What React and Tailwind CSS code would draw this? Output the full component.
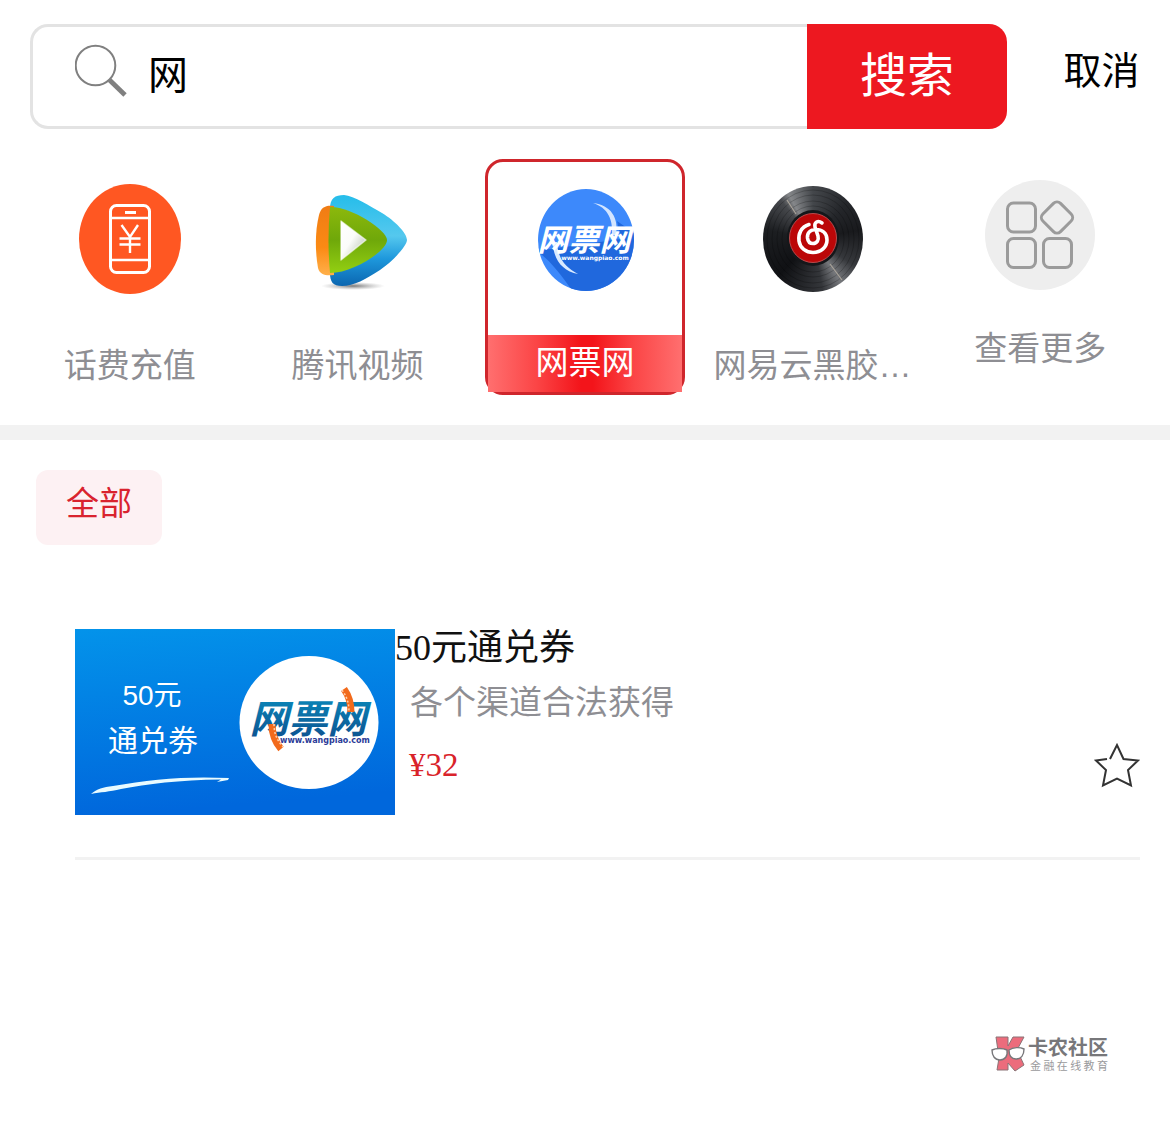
import React from "react";

const SANS = "font-['Liberation_Sans','Noto_Sans_CJK_SC',sans-serif]";
const SERIF = "font-['Liberation_Serif','Noto_Sans_CJK_SC',serif]";
const WIDE = "font-['DejaVu_Sans',sans-serif]";

function SearchIcon() {
  return (
    <svg width="52" height="54" viewBox="0 0 52 54" fill="none" stroke="#808080" aria-hidden="true">
      <circle cx="20.500" cy="21.500" r="19.800" strokeWidth="2" />
      <path d="M34.500 36 L50 51" strokeWidth="4.800" />
    </svg>
  );
}

function PhoneIcon() {
  return (
    <svg width="104" height="110" viewBox="0 0 104 110" fill="none" stroke="#fff" aria-hidden="true">
      <ellipse cx="52" cy="55" rx="51" ry="55" fill="#ff5722" stroke="none" />
      <rect x="32.500" y="21.500" width="39" height="67" rx="6" strokeWidth="3" />
      <path d="M32 34h39M32 76h39" strokeWidth="2.600" />
      <path d="M47 28.500h11" strokeWidth="3" />
      <path d="M43.500 41 L52 53 L60 41M52 53v16M41.500 54.500h21M41.500 60.500h21" strokeWidth="2.400" />
    </svg>
  );
}

function VideoIcon() {
  return (
    <svg width="104" height="110" viewBox="-3 -1 104 110" aria-hidden="true">
      <defs>
        <linearGradient id="vBlue" x1="0" y1="0" x2="0" y2="1">
          <stop offset="0" stopColor="#25bdea" />
          <stop offset="0.45" stopColor="#55c8ee" />
          <stop offset="0.7" stopColor="#1e98dc" />
          <stop offset="1" stopColor="#0b66b0" />
        </linearGradient>
        <linearGradient id="vOrange" x1="0" y1="0" x2="0" y2="1">
          <stop offset="0" stopColor="#f07c14" />
          <stop offset="0.6" stopColor="#fb8a14" />
          <stop offset="1" stopColor="#ffb04a" />
        </linearGradient>
        <linearGradient id="vGreen" x1="0" y1="0" x2="0" y2="1">
          <stop offset="0" stopColor="#8cb80c" />
          <stop offset="0.5" stopColor="#6fa80a" />
          <stop offset="1" stopColor="#93cf12" />
        </linearGradient>
        <linearGradient id="vWhite" x1="0" y1="0" x2="1" y2="1">
          <stop offset="0" stopColor="#fff" />
          <stop offset="0.45" stopColor="#fbfcfa" />
          <stop offset="0.9" stopColor="#b9c4b4" />
        </linearGradient>
        <radialGradient id="vShade">
          <stop offset="0" stopColor="#555" stopOpacity="0.8" />
          <stop offset="1" stopColor="#999" stopOpacity="0" />
        </radialGradient>
      </defs>
      <ellipse cx="45" cy="101" rx="32" ry="4" fill="url(#vShade)" />
      <path d="M22 24 C22 13 27 10 36 10 C46 11 62 21 74 28 C87 36 99 48 99 55 C99 61 84 77 72 85 C58 94 46 101 34 101 C25 101 22 97 22 88 Z" fill="url(#vBlue)" />
      <path d="M26 21 C18 20 13 22 11 30 C7 46 7 66 10 83 C12 90 18 91 26 90 Z" fill="url(#vOrange)" />
      <path d="M22 22 C42 21 79 45 79 55 C79 66 45 88 22 88 C20 66 20 44 22 22 Z" fill="url(#vGreen)" />
      <path d="M33 36 L58 55 L33 75 Z" fill="url(#vWhite)" stroke="#fff" strokeOpacity="0.6" strokeLinejoin="round" strokeWidth="1.500" />
    </svg>
  );
}

function TicketIcon() {
  return (
    <svg width="104" height="110" viewBox="0 0 104 110" aria-hidden="true">
      <defs>
        <clipPath id="tClip">
          <ellipse cx="53" cy="55" rx="48" ry="51" />
        </clipPath>
      </defs>
      <g clipPath="url(#tClip)">
        <rect width="104" height="110" fill="#3d89fb" />
        <path d="M4 66 C18 76 30 92 42 110 H104 V50 L84 36 L88 54 Z" fill="#2068dd" />
      </g>
      <path d="M60 18 C75 23 80 34 79 50 L83 50 C86 33 78 20 60 18 Z" fill="#d3e5ff" />
      <path d="M20 57 C20 74 29 86 45 89 C32 82 25 74 24 57 Z" fill="#d9eaff" />
      <text x="51" y="66" textAnchor="middle" fontSize="31" fontWeight="700" fontStyle="italic" fill="#fff" className={SANS}>网票网</text>
      <text x="62" y="75" textAnchor="middle" fontSize="6" fontWeight="700" fill="#fff" className={WIDE}>www.wangpiao.com</text>
    </svg>
  );
}

function RecordIcon() {
  return (
    <span className="relative flex h-[106px] w-[100px] rounded-[50%] bg-[conic-gradient(#44474b,#24262a_12%,#191a1d_22%,#36383c_34%,#75777b_41%,#34363a_47%,#101114_62%,#1c1e21_78%,#46484c_89%,#85878a_92%,#44474b)]">
      <svg className="h-full w-full" viewBox="0 0 100 106" fill="none" aria-hidden="true">
        <g stroke="#000" strokeOpacity="0.2">
          <ellipse cx="50" cy="53" rx="46" ry="49" />
          <ellipse cx="50" cy="53" rx="41" ry="44" />
          <ellipse cx="50" cy="53" rx="36" ry="38" />
          <ellipse cx="50" cy="53" rx="31" ry="33" />
        </g>
        <path d="M24 14 L33 28M67 78 L79 94" stroke="#a9a39a" strokeWidth="1.200" />
        <ellipse cx="50" cy="52" rx="26" ry="28" fill="#15171a" />
        <ellipse cx="50" cy="52" rx="23.500" ry="24.500" fill="#bb0708" stroke="#b84a4c" />
        <path d="M46 38.500 C38 41 35 48 36 55 C37 62 43 66.500 50 66.500 C58 66.500 64 61 64 54 C64 47 59 43.500 53 43.500 C47 43.500 44 47 44.500 52 C45 56 47.500 57.500 50 57.500 C54 57.500 56 54 55 50 L52 41 C51 36 55 34 59 37" stroke="#fff" strokeWidth="3.600" strokeLinecap="round" />
      </svg>
    </span>
  );
}

function MoreIcon() {
  return (
    <svg width="110" height="110" viewBox="0 0 110 110" fill="none" stroke="#9b9b9b" strokeWidth="3" aria-hidden="true">
      <circle cx="55" cy="55" r="55" fill="#eee" stroke="none" />
      <rect x="22.500" y="23" width="28" height="29" rx="6" />
      <rect x="22.500" y="58.500" width="28" height="29" rx="6" />
      <rect x="58.500" y="58.500" width="28" height="29" rx="6" />
      <rect x="59.500" y="25" width="25" height="25" rx="5" transform="rotate(45 72 37.500)" />
    </svg>
  );
}

const services = [
  { name: "话费充值", Icon: PhoneIcon },
  { name: "腾讯视频", Icon: VideoIcon },
  { name: "网票网", Icon: TicketIcon, active: true },
  { name: "网易云黑胶…", Icon: RecordIcon },
  { name: "查看更多", Icon: MoreIcon, raised: true },
];

function Service({ name, Icon, active, raised }) {
  if (active) {
    return (
      <button type="button" aria-pressed="true" className="flex h-[236px] flex-col items-center justify-between rounded-[18px] border-[3px] border-[#cf262c]">
        <span className="mt-[23px] flex h-[110px] items-center justify-center"><Icon /></span>
        <span className="h-[57px] w-full bg-[linear-gradient(90deg,#ff6f6f,#fb4546_25%,#f3141a_48%,#f3141a_54%,#fb4546_75%,#ff6f6f)] text-center leading-[56px] text-white">
          {name}
        </span>
      </button>
    );
  }
  return (
    <button type="button" className={raised ? "flex flex-col items-center pt-[21px]" : "flex flex-col items-center pt-[25px]"}>
      <span className="flex h-[110px] items-center justify-center"><Icon /></span>
      <span className={raised ? "mt-8 whitespace-nowrap leading-[54px] text-[#8e8e93]" : "mt-[45px] whitespace-nowrap leading-[54px] text-[#8e8e93]"}>{name}</span>
    </button>
  );
}

function Banner() {
  return (
    <svg width="320" height="186" viewBox="0 0 320 186" role="img" aria-label="50元通兑劵" className="shrink-0">
      <defs>
        <linearGradient id="bBg" x1="0" y1="0" x2="0.150" y2="1">
          <stop offset="0" stopColor="#0393ea" />
          <stop offset="1" stopColor="#0067dc" />
        </linearGradient>
        <linearGradient id="bLogo" x1="0" y1="0" x2="0" y2="1">
          <stop offset="0" stopColor="#0a86b8" />
          <stop offset="1" stopColor="#0d4f8e" />
        </linearGradient>
      </defs>
      <rect width="320" height="186" fill="url(#bBg)" />
      <g fill="#fff" textAnchor="middle" className={SANS}>
        <text x="77" y="76" fontSize="28">50元</text>
        <text x="78" y="122" fontSize="30">通兑劵</text>
      </g>
      <path d="M16 165 C22 160 28 158 38 157 C76 150 112 147 154 149 L153 151 L142 153 L146 150.500 C104 151 72 155 46 160 C34 163 26 163 16 165 Z" fill="#e9fbff" />
      <ellipse cx="234" cy="93.500" rx="69.500" ry="66.500" fill="#fff" />
      <text x="233" y="104" textAnchor="middle" fontSize="39" fontWeight="700" fontStyle="italic" fill="url(#bLogo)" className={SANS}>网票网</text>
      <g fill="none" stroke="#f26a1b" strokeWidth="7">
        <path d="M269 60 C274 67 276 74 276 83" />
        <path d="M197 95 C197 106 200 113 206 120" />
      </g>
      <g fill="none" stroke="#ffd0ac" strokeWidth="1.500" strokeDasharray="2 2">
        <path d="M267 61 C272 68 274 74 274 83" />
        <path d="M199 95 C199 105 202 111 208 118" />
      </g>
      <text x="250" y="114" textAnchor="middle" fontSize="8" fontWeight="700" fill="#2b3c98" className={WIDE}>www.wangpiao.com</text>
    </svg>
  );
}

function CommunityLogo() {
  return (
    <svg width="35" height="36" viewBox="0 0 35 36" aria-hidden="true">
      <path d="M5 1 H17 V10 L22 1 H33 L26 14 L33 29 L24 35 L17 27 V34 H6 L8 22 Z" fill="#ec6c7c" stroke="#8a7376" strokeWidth="1" />
      <g fill="#fff" stroke="#77777a" strokeWidth="1.400">
        <path d="M1 14 C5 12 12 12 16 14 C17 20 14 24 9 24 C4 24 1 20 1 14 Z" />
        <path d="M18 14 C22 11 29 11 33 13 C33 19 30 23 25 23 C20 23 18 19 18 14 Z" />
      </g>
    </svg>
  );
}

export default function App() {
  return (
    <main className={`bg-white text-[33px] text-black ${SANS}`}>
      <header className="flex pl-[30px] pt-6">
        <form className="flex h-[105px] min-w-0 flex-1" onSubmit={(e) => e.preventDefault()}>
          <label className="flex min-w-0 flex-1 items-center gap-[21px] rounded-l-[18px] border-[3px] border-r-0 border-[#e3e3e3] pl-[42px]">
            <span className="pb-3"><SearchIcon /></span>
            <input type="text" aria-label="搜索内容" defaultValue="网" className="h-full min-w-0 flex-1 bg-transparent pb-2.5 text-[40px] outline-none" />
          </label>
          <button type="submit" className="w-[200px] rounded-r-[18px] bg-[#ed1820] text-center text-[47px] text-white">搜索</button>
        </form>
        <button type="button" className="h-[94px] w-[163px] pl-[26px] text-center text-[38px]">取消</button>
      </header>

      <nav className="mt-[30px] grid grid-cols-5 items-start gap-7 px-[30px]">
        {services.map((s) => <Service key={s.name} {...s} />)}
      </nav>

      <div className="mt-[30px] h-[15px] bg-[#f2f2f2]" />

      <section className="px-[30px]">
        <button type="button" className="ml-1.5 mt-[30px] h-[75px] rounded-xl bg-[#fdf1f3] px-[30px] pb-2 text-[#d9232e]">全部</button>
        <article className="ml-[45px] mt-[84px] flex border-b-[3px] border-[#f2f2f2] pb-[42px]">
          <Banner />
          <div className="min-w-0 flex-1">
            <h2 className={`text-[36px] leading-[38px] text-[#111] ${SERIF}`}>50元通兑券</h2>
            <p className="ml-[15px] mt-[11px] leading-[50px] text-[#8e8e93]">各个渠道合法获得</p>
            <p className={`ml-[14px] mt-[15px] leading-11 text-[#d9232a] ${SERIF}`}>¥32</p>
          </div>
          <button type="button" aria-label="收藏" className="mt-28 self-start">
            <svg width="46" height="48" viewBox="0 0 46 48" fill="none" stroke="#333" strokeWidth="2" aria-hidden="true">
              <path d="M16 18 L23 4 L29.500 18 L44 19.500 L34 29 L37 44.500 L23 37.500 L9 44.500 L12 29 L2 19.500 L13 18" />
            </svg>
          </button>
        </article>
      </section>

      <footer className="mt-[176px] flex items-center justify-end gap-0.5 pb-12 pr-[62px]">
        <CommunityLogo />
        <div className="text-[#77777a]">
          <p className="text-[20px] font-bold leading-6">卡农社区</p>
          <p className="flex justify-between pl-0.5 text-[11px] leading-3 text-[#9a9a9c]">
            {[..."金融在线教育"].map((c) => <span key={c}>{c}</span>)}
          </p>
        </div>
      </footer>
    </main>
  );
}
